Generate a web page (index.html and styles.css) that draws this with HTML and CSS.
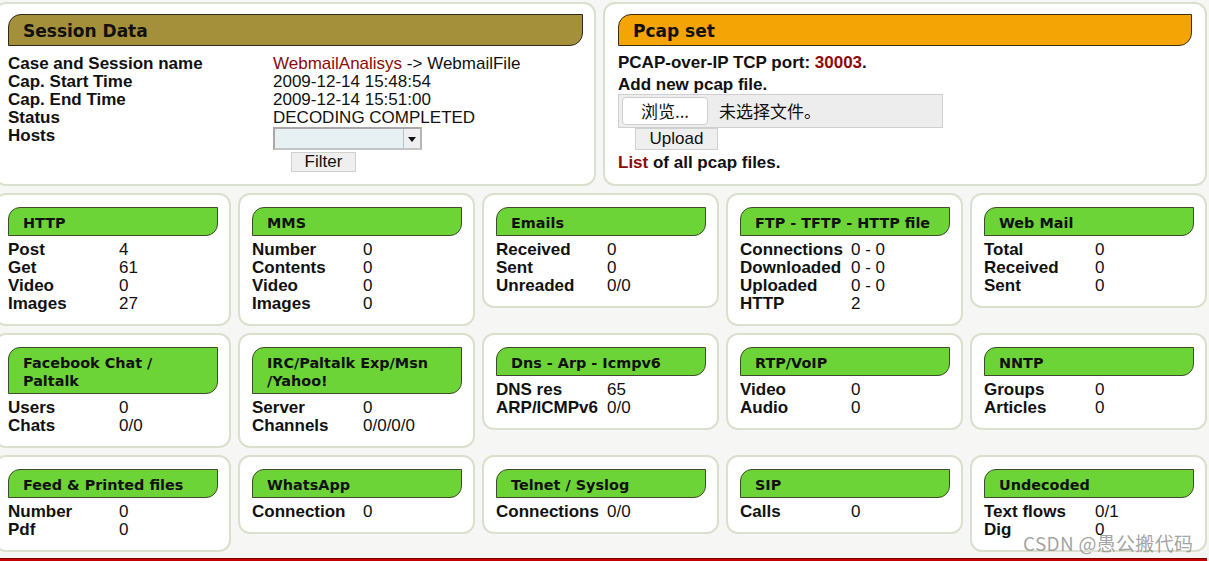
FILE: index.html
```html
<!DOCTYPE html>
<html>
<head>
<meta charset="utf-8">
<link rel="stylesheet" href="styles.css">
</head>
<body>
<div class="page">
  <div class="top">
    <section class="panel session">
      <h2 class="bar bar-olive">Session Data</h2>
      <div class="srows">
        <div class="lab">Case and Session name</div><div class="val"><span class="red">WebmailAnalisys</span> -&gt; WebmailFile</div>
        <div class="lab">Cap. Start Time</div><div class="val">2009-12-14 15:48:54</div>
        <div class="lab">Cap. End Time</div><div class="val">2009-12-14 15:51:00</div>
        <div class="lab">Status</div><div class="val">DECODING COMPLETED</div>
        <div class="lab">Hosts</div>
        <div class="val">
          <div class="select"><span class="arrow"><span class="tri"></span></span></div>
          <div class="btn filter">Filter</div>
        </div>
      </div>
    </section>
    <section class="panel pcap">
      <h2 class="bar bar-orange">Pcap set</h2>
      <div class="pline first">PCAP-over-IP TCP port: <span class="red">30003</span>.</div>
      <div class="pline second">Add new pcap file.</div>
      <div class="filebox"><span class="browse">浏览...</span><span class="nofile">未选择文件。</span></div>
      <div class="btn upload">Upload</div>
      <div class="pline list"><span class="red">List</span> of all pcap files.</div>
    </section>
  </div>

  <div class="grid">
    <section class="card">
      <h3 class="cbar">HTTP</h3>
      <div class="rows"><b>Post</b><span>4</span><b>Get</b><span>61</span><b>Video</b><span>0</span><b>Images</b><span>27</span></div>
    </section>
    <section class="card">
      <h3 class="cbar">MMS</h3>
      <div class="rows"><b>Number</b><span>0</span><b>Contents</b><span>0</span><b>Video</b><span>0</span><b>Images</b><span>0</span></div>
    </section>
    <section class="card">
      <h3 class="cbar">Emails</h3>
      <div class="rows"><b>Received</b><span>0</span><b>Sent</b><span>0</span><b>Unreaded</b><span>0/0</span></div>
    </section>
    <section class="card">
      <h3 class="cbar">FTP - TFTP - HTTP file</h3>
      <div class="rows"><b>Connections</b><span>0 - 0</span><b>Downloaded</b><span>0 - 0</span><b>Uploaded</b><span>0 - 0</span><b>HTTP</b><span>2</span></div>
    </section>
    <section class="card">
      <h3 class="cbar">Web Mail</h3>
      <div class="rows"><b>Total</b><span>0</span><b>Received</b><span>0</span><b>Sent</b><span>0</span></div>
    </section>

    <section class="card">
      <h3 class="cbar">Facebook Chat /<br>Paltalk</h3>
      <div class="rows"><b>Users</b><span>0</span><b>Chats</b><span>0/0</span></div>
    </section>
    <section class="card">
      <h3 class="cbar">IRC/Paltalk Exp/Msn<br>/Yahoo!</h3>
      <div class="rows"><b>Server</b><span>0</span><b>Channels</b><span>0/0/0/0</span></div>
    </section>
    <section class="card">
      <h3 class="cbar">Dns - Arp - Icmpv6</h3>
      <div class="rows"><b>DNS res</b><span>65</span><b>ARP/ICMPv6</b><span>0/0</span></div>
    </section>
    <section class="card">
      <h3 class="cbar">RTP/VoIP</h3>
      <div class="rows"><b>Video</b><span>0</span><b>Audio</b><span>0</span></div>
    </section>
    <section class="card">
      <h3 class="cbar">NNTP</h3>
      <div class="rows"><b>Groups</b><span>0</span><b>Articles</b><span>0</span></div>
    </section>

    <section class="card">
      <h3 class="cbar">Feed &amp; Printed files</h3>
      <div class="rows"><b>Number</b><span>0</span><b>Pdf</b><span>0</span></div>
    </section>
    <section class="card">
      <h3 class="cbar">WhatsApp</h3>
      <div class="rows"><b>Connection</b><span>0</span></div>
    </section>
    <section class="card">
      <h3 class="cbar">Telnet / Syslog</h3>
      <div class="rows"><b>Connections</b><span>0/0</span></div>
    </section>
    <section class="card">
      <h3 class="cbar">SIP</h3>
      <div class="rows"><b>Calls</b><span>0</span></div>
    </section>
    <section class="card">
      <h3 class="cbar">Undecoded</h3>
      <div class="rows"><b>Text flows</b><span>0/1</span><b>Dig</b><span>0</span></div>
    </section>
  </div>
  <div class="footer"></div>
</div>
<div class="watermark">CSDN @愚公搬代码</div>
</body>
</html>
```

FILE: styles.css
```css
html, body {
  margin: 0;
  padding: 0;
}
body {
  background: #f6f6f4;
  font-family: "Liberation Sans", Arial, sans-serif;
  font-size: 17px;
  line-height: 18px;
  color: #111;
  overflow: hidden;
  width: 1209px;
  height: 561px;
  position: relative;
}
.page {
  margin: 2px 0 0 -6px;
  width: 1213px;
}
.top {
  display: flex;
  gap: 7px;
}
.panel {
  background: #fff;
  border: 2px solid #d9e0cd;
  border-radius: 12px;
  box-sizing: border-box;
  height: 184px;
}
.session {
  width: 602px;
  padding: 10px 11px 0 12px;
}
.pcap {
  width: 604px;
  padding: 10px 13px 0 13px;
}
.bar {
  margin: 0;
  font-family: "DejaVu Sans", Verdana, sans-serif;
  font-weight: bold;
  font-size: 17px;
  line-height: 19px;
  padding: 7px 14px 4px;
  border: 1px solid #2b2a1c;
  border-radius: 13px 0 13px 0;
  color: #111;
}
.bar-olive { background: #a48f3b; }
.bar-orange { background: #f4a405; border-color: #3a2d10; }
.red { color: #8b0a0a; }

.srows {
  margin-top: 9px;
  display: grid;
  grid-template-columns: 265px 1fr;
}
.lab { font-weight: bold; }
.select {
  width: 149px;
  height: 23px;
  box-sizing: border-box;
  border: 2px solid #a9a9a9;
  border-bottom-color: #c4c4c4;
  border-right-color: #b5b5b5;
  background: #e7f0f2;
  position: relative;
}
.arrow {
  position: absolute;
  right: 0;
  top: 0;
  width: 16px;
  height: 19px;
  background: #efefef;
  border-left: 1px solid #c0c0c0;
}
.tri {
  position: absolute;
  left: 4px;
  top: 8px;
  width: 0;
  height: 0;
  border-left: 4px solid transparent;
  border-right: 4px solid transparent;
  border-top: 5px solid #111;
}
.btn {
  box-sizing: border-box;
  background: #efefef;
  border: 1px solid #d0d0d0;
  text-align: center;
  color: #111;
}
.filter {
  margin: 2px 0 0 18px;
  width: 65px;
  height: 20px;
  line-height: 18px;
}

.pline { font-weight: bold; }
.pline.first { margin-top: 8px; }
.pline.second { margin-top: 4px; }
.filebox {
  margin-top: 0;
  width: 325px;
  height: 34px;
  box-sizing: border-box;
  background: #ededed;
  border: 1px solid #cfcfcf;
  display: flex;
  align-items: center;
  padding-left: 3px;
  font-family: "Liberation Sans", "Noto Sans CJK SC", sans-serif;
}
.browse {
  width: 86px;
  height: 28px;
  box-sizing: border-box;
  background: #fff;
  border: 1px solid #cfcfcf;
  border-radius: 4px;
  text-align: center;
  line-height: 26px;
  font-family: "Noto Sans CJK SC", sans-serif;
  font-size: 17px;
}
.nofile {
  margin-left: 11px;
  font-family: "Noto Sans CJK SC", sans-serif;
  font-size: 17px;
}
.upload {
  margin-left: 17px;
  width: 83px;
  height: 22px;
  line-height: 20px;
}
.pline.list { margin-top: 4px; }

.grid {
  margin-top: 7px;
  display: grid;
  grid-template-columns: repeat(5, 237px);
  column-gap: 7px;
  row-gap: 7px;
  align-items: start;
}
.card {
  background: #fff;
  border: 2px solid #d9e0cd;
  border-radius: 12px;
  padding: 12px 11px 11px 12px;
}
.cbar {
  margin: 0;
  font-family: "DejaVu Sans", Verdana, sans-serif;
  font-weight: bold;
  font-size: 14.4px;
  line-height: 18px;
  padding: 6px 10px 3px 14px;
  background: #6dd437;
  border: 1px solid #3f4b2a;
  border-radius: 12px 0 12px 0;
  color: #111;
}
.rows {
  margin-top: 5px;
  display: grid;
  grid-template-columns: 111px 1fr;
}
.rows b { font-weight: bold; white-space: nowrap; }
.rows span { white-space: nowrap; }

.footer {
  margin-top: 6px;
  height: 2px;
  background: #c40000;
  border-top: 1px solid #7a0000;
}
.watermark {
  position: absolute;
  left: 1023px;
  top: 530px;
  font-family: "Noto Sans CJK SC", sans-serif;
  font-size: 19px;
  line-height: 26px;
  color: rgba(140, 140, 140, 0.8);
  letter-spacing: 0.3px;
}
```
